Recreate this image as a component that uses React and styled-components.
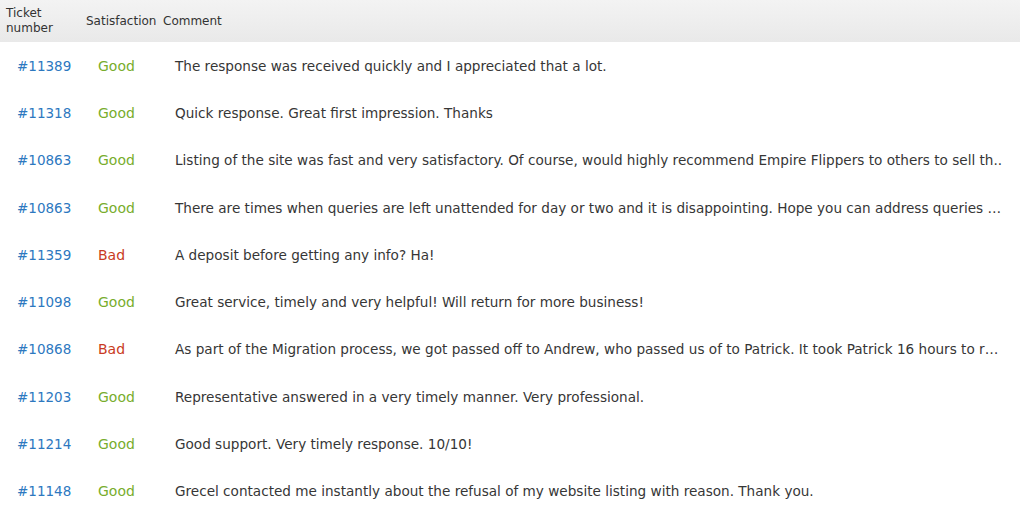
import React from "react";
import styled, { createGlobalStyle } from "styled-components";

const Global = createGlobalStyle`
  html, body { margin: 0; padding: 0; background: #ffffff; }
  body { font-family: "DejaVu Sans", Verdana, sans-serif; }
`;

const Table = styled.div`
  width: 1020px;
  height: 530px;
  overflow: hidden;
  background: #fff;
`;

const HeaderRow = styled.div`
  display: grid;
  grid-template-columns: 80px 83px 1fr;
  height: 42px;
  align-items: center;
  background: linear-gradient(#f3f3f3, #e9e9e9);
  color: #333;
  font-size: 12px;
  line-height: 15px;
`;

const HeadCell = styled.div`
  padding-left: ${(p) => (p.$pad === undefined ? 6 : p.$pad)}px;
  white-space: ${(p) => (p.$wrap ? "normal" : "nowrap")};
`;

const Row = styled.div`
  display: grid;
  grid-template-columns: 80px 84px 1fr;
  height: 47.3px;
  align-items: center;
  font-size: 13.6px;
`;

const Ticket = styled.a`
  padding-left: 17px;
  color: #2d78bf;
  text-decoration: none;
  font-size: 13.5px;
`;

const Status = styled.span`
  padding-left: 18px;
  font-size: 14px;
  color: ${(p) => (p.$bad ? "#c93a22" : "#78ad2c")};
`;

const Comment = styled.span`
  padding-left: 11px;
  color: #363636;
  white-space: nowrap;
  overflow: hidden;
`;

const rows = [
  ["#11389", "Good", "The response was received quickly and I appreciated that a lot."],
  ["#11318", "Good", "Quick response. Great first impression. Thanks"],
  ["#10863", "Good", "Listing of the site was fast and very satisfactory. Of course, would highly recommend Empire Flippers to others to sell th.."],
  ["#10863", "Good", "There are times when queries are left unattended for day or two and it is disappointing. Hope you can address queries …"],
  ["#11359", "Bad", "A deposit before getting any info? Ha!"],
  ["#11098", "Good", "Great service, timely and very helpful! Will return for more business!"],
  ["#10868", "Bad", "As part of the Migration process, we got passed off to Andrew, who passed us of to Patrick. It took Patrick 16 hours to r…"],
  ["#11203", "Good", "Representative answered in a very timely manner. Very professional."],
  ["#11214", "Good", "Good support. Very timely response. 10/10!"],
  ["#11148", "Good", "Grecel contacted me instantly about the refusal of my website listing with reason. Thank you."],
];

export default function App() {
  return (
    <>
      <Global />
      <Table>
        <HeaderRow>
          <HeadCell $wrap>Ticket<br />number</HeadCell>
          <HeadCell>Satisfaction</HeadCell>
          <HeadCell $pad={0}>Comment</HeadCell>
        </HeaderRow>
        {rows.map(([t, s, c], i) => (
          <Row key={i}>
            <Ticket href="#">{t}</Ticket>
            <Status $bad={s === "Bad"}>{s}</Status>
            <Comment>{c}</Comment>
          </Row>
        ))}
      </Table>
    </>
  );
}
